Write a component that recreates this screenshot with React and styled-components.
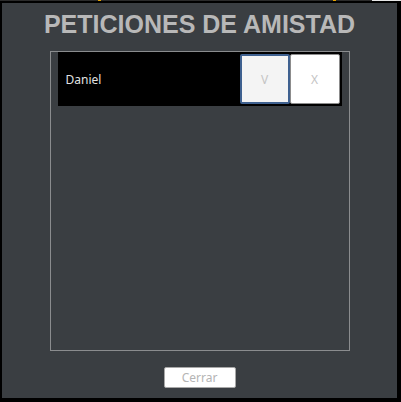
import React from "react";
import styled, { createGlobalStyle } from "styled-components";

const Global = createGlobalStyle`
  html, body { margin: 0; padding: 0; background: #000; }
  body { width: 401px; height: 402px; overflow: hidden; }
`;

const Screen = styled.div`
  width: 401px;
  height: 402px;
  background: #000;
  display: flex;
  flex-direction: column;
`;

const TopStrip = styled.div`
  height: 1px;
  display: flex;
  background: #2b2b2b;
  margin-bottom: 2px;
`;

const StripSeg = styled.div`
  height: 1px;
  flex: ${(p) => (p.$grow ? 1 : "none")};
  width: ${(p) => (p.$w ? `${p.$w}px` : "auto")};
  background: ${(p) => p.$c || "transparent"};
`;

const Panel = styled.div`
  margin: 0 4px 0 2px;
  height: 395px;
  background: #3a3e42;
  display: flex;
  flex-direction: column;
  align-items: center;
  padding-top: 9px;
  box-sizing: border-box;
`;

const Title = styled.h1`
  margin: 0;
  font-family: "Liberation Sans", Arial, sans-serif;
  font-weight: bold;
  font-size: 25px;
  line-height: 25px;
  color: #b8b8b8;
  letter-spacing: 0;
`;

const ListBox = styled.div`
  margin-top: 14px;
  width: 300px;
  height: 300px;
  box-sizing: border-box;
  border: 1px solid #8a8c8e;
  padding: 0 7px;
  display: flex;
  flex-direction: column;
`;

const Row = styled.div`
  height: 54px;
  background: #000;
  display: flex;
  align-items: flex-start;
  padding: 2px 2px 0 8px;
  box-sizing: border-box;
`;

const Name = styled.span`
  flex: 1;
  align-self: center;
  font-family: "Noto Sans", "Open Sans", sans-serif;
  font-size: 12px;
  color: #e2e2e2;
  margin-top: -2px;
`;

const SquareButton = styled.button`
  width: 50px;
  height: 50px;
  box-sizing: border-box;
  border-radius: 2px;
  border: ${(p) => (p.$focused ? "2px solid #3f6190" : "1px solid #8c8c8c")};
  background: ${(p) => (p.$focused ? "#f4f4f4" : "#ffffff")};
  color: #c4c4c4;
  font-family: "Noto Sans", "Open Sans", sans-serif;
  font-size: 12px;
  padding: 0;
  display: flex;
  align-items: center;
  justify-content: center;
`;

const Footer = styled.div`
  margin-top: 16px;
`;

const CloseButton = styled.button`
  width: 72px;
  height: 21px;
  box-sizing: border-box;
  background: #fff;
  border: 1px solid #a8a8a8;
  border-radius: 2px;
  color: #b4b4b4;
  font-family: "Noto Sans", "Open Sans", sans-serif;
  font-size: 12px;
  padding: 0;
  line-height: 19px;
`;

export default function App() {
  return (
    <>
      <Global />
      <Screen>
        <TopStrip>
          <StripSeg $w={98} />
          <StripSeg $w={3} $c="#e8a400" />
          <StripSeg $w={232} />
          <StripSeg $w={3} $c="#e8a400" />
          <StripSeg $w={36} />
          <StripSeg $grow $c="#e6e6e6" />
        </TopStrip>
        <Panel>
          <Title>PETICIONES DE AMISTAD</Title>
          <ListBox>
            <Row>
              <Name>Daniel</Name>
              <SquareButton $focused>V</SquareButton>
              <SquareButton>X</SquareButton>
            </Row>
          </ListBox>
          <Footer>
            <CloseButton>Cerrar</CloseButton>
          </Footer>
        </Panel>
      </Screen>
    </>
  );
}
